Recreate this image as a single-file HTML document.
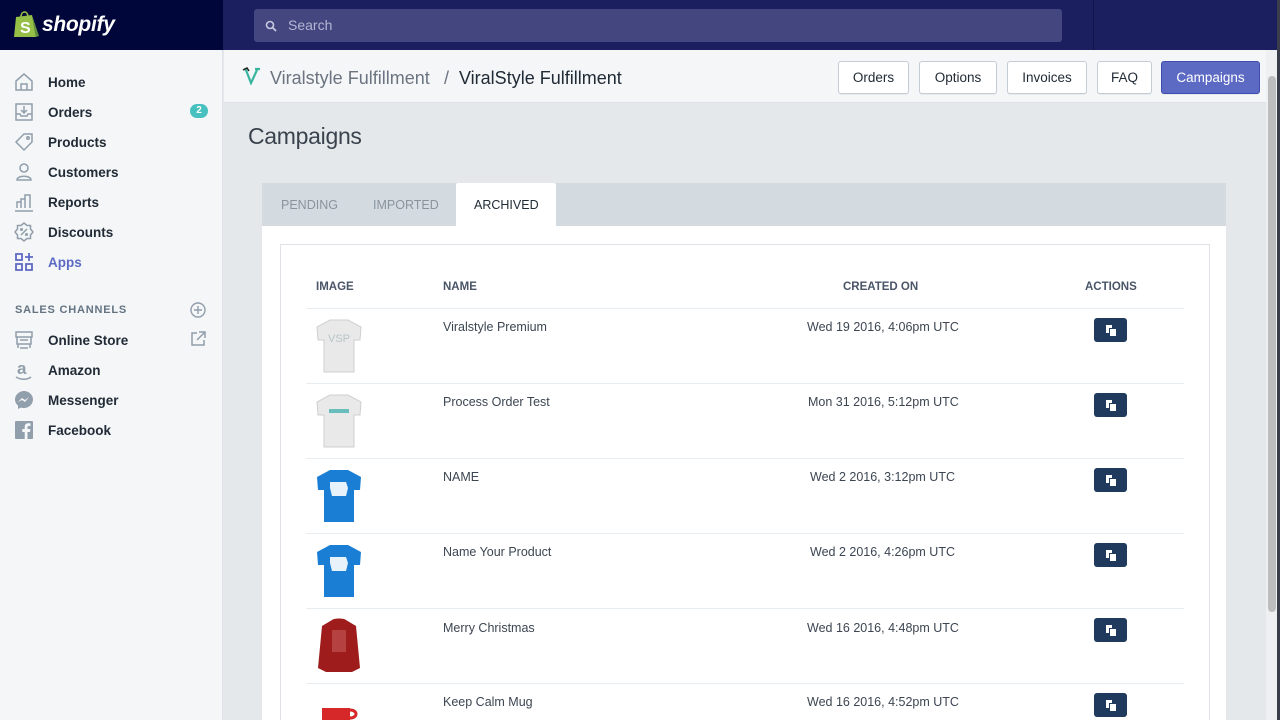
<!DOCTYPE html>
<html><head><meta charset="utf-8"><style>
*{box-sizing:border-box;margin:0;padding:0}
body{width:1280px;height:720px;overflow:hidden;font-family:"Liberation Sans",sans-serif;background:#e4e8eb;position:relative}
.top{position:absolute;left:0;top:0;width:1280px;height:50px;background:#1c1f5f}
.topl{position:absolute;left:0;top:0;width:223px;height:50px;background:#000639}
.search{position:absolute;left:254px;top:9px;width:808px;height:33px;background:#43467f;border-radius:3px;color:#b4b6d4;font-size:14px;line-height:33px;padding-left:34px}
.div{position:absolute;left:1093px;top:0;width:1px;height:50px;background:#12154a}
.side{position:absolute;left:0;top:50px;width:223px;height:670px;background:#f4f6f8;border-right:1px solid #dfe3e8}
.nav{position:absolute;left:0;width:200px;height:20px;font-size:13.5px;color:#212b36;font-weight:bold}
.nav svg{position:absolute;left:14px;top:0}
.nav span{position:absolute;left:48px;top:3px;white-space:nowrap;line-height:16px}
.hdr{position:absolute;left:224px;top:50px;width:1044px;height:53px;background:#f4f6f8;border-bottom:1px solid #dde1e5}
.btn{position:absolute;top:61px;height:33px;background:#fff;border:1px solid #c4cdd5;border-radius:3px;font-size:13.5px;color:#212b36;text-align:center;line-height:31px;box-shadow:0 1px 0 rgba(0,0,0,.05)}
.th{position:absolute;top:281px;font-size:11.5px;font-weight:bold;color:#4a5568}
.row{position:absolute;left:306px;width:878px;height:1px;background:#e8edf2}
.cell{position:absolute;font-size:12.5px;color:#3c4652}
.act{position:absolute;left:1094px;width:33px;height:24px;background:#1f3a5c;border-radius:3px}
.act::before{content:"";position:absolute;left:12px;top:7px;width:6px;height:8px;background:#fff}
.act::after{content:"";position:absolute;left:15px;top:10px;width:6px;height:7px;background:#fff;border:1px solid #1f3a5c}
</style></head><body>
<div class="top"></div><div class="topl"></div>
<svg style="position:absolute;left:13px;top:10px" width="26" height="28" viewBox="0 0 26 28"><path d="M3 7 L19 5 L23 27 L1 27 Z" fill="#95bf47"/><path d="M19 5 L23 27 L26 26 Z" fill="#5e8e3e"/><path d="M8 7 C8 1 14 0 15 6" stroke="#95bf47" stroke-width="1.6" fill="none"/><text x="7" y="23" font-size="16" font-weight="bold" fill="#fff" font-family="Liberation Sans">S</text></svg>
<div style="position:absolute;left:42px;top:13px;color:#fff;font-size:21px;font-weight:bold;font-style:italic;letter-spacing:-.3px">shopify</div>
<div class="search">Search</div>
<svg style="position:absolute;left:265px;top:20px" width="12" height="12" viewBox="0 0 12 12"><circle cx="5" cy="5" r="3.5" stroke="#c8cae0" stroke-width="1.6" fill="none"/><path d="M7.5 7.5L11 11" stroke="#c8cae0" stroke-width="1.8"/></svg>
<div class="div"></div>
<div class="side"></div>
<div class="nav" style="top:72px"><svg width="20" height="20" viewBox="0 0 20 20" fill="none" stroke="#919eab" stroke-width="1.5"><path d="M2 9L10 2L18 9V18H2Z M7 18V12H13V18"/></svg><span>Home</span></div>
<div class="nav" style="top:102px"><svg width="20" height="20" viewBox="0 0 20 20" fill="none" stroke="#919eab" stroke-width="1.5"><path d="M2 2H18V18H2Z M2 12H6L7 14H13L14 12H18 M10 4V10 M7 8L10 11L13 8"/></svg><span>Orders</span></div>
<div style="position:absolute;left:190px;top:104px;width:18px;height:14px;border-radius:7px;background:#47c1bf;color:#fff;font-size:10px;font-weight:bold;text-align:center;line-height:14px">2</div>
<div class="nav" style="top:132px"><svg width="20" height="20" viewBox="0 0 20 20" fill="none" stroke="#919eab" stroke-width="1.5"><path d="M2 10L10 2H18V10L10 18Z"/><circle cx="14" cy="6" r="1.2"/></svg><span>Products</span></div>
<div class="nav" style="top:162px"><svg width="20" height="20" viewBox="0 0 20 20" fill="none" stroke="#919eab" stroke-width="1.5"><circle cx="10" cy="6" r="4"/><path d="M3 18C3 13 17 13 17 18Z"/></svg><span>Customers</span></div>
<div class="nav" style="top:192px"><svg width="20" height="20" viewBox="0 0 20 20" fill="none" stroke="#919eab" stroke-width="1.5"><path d="M1 19H19 M3 16V10H7V16 M7 16V7H11V16 M11 16V3H16V16"/></svg><span>Reports</span></div>
<div class="nav" style="top:222px"><svg width="20" height="20" viewBox="0 0 20 20" fill="none" stroke="#919eab" stroke-width="1.5"><path d="M10 1L13 3.5H16.5V7L19 10L16.5 13V16.5H13L10 19L7 16.5H3.5V13L1 10L3.5 7V3.5H7Z M7 13L13 7"/><circle cx="7.5" cy="7.5" r=".8"/><circle cx="12.5" cy="12.5" r=".8"/></svg><span>Discounts</span></div>
<div class="nav" style="top:252px"><svg width="20" height="20" viewBox="0 0 20 20" fill="none" stroke="#5c6ac4" stroke-width="1.8"><path d="M2 2H8V8H2Z M2 12H8V18H2Z M12 12H18V18H12Z M15 1V9 M11 5H19"/></svg><span style="color:#5c6ac4">Apps</span></div>
<div style="position:absolute;left:15px;top:304px;font-size:11px;font-weight:bold;color:#637381;letter-spacing:.8px">SALES CHANNELS</div>
<svg style="position:absolute;left:190px;top:302px" width="16" height="16" viewBox="0 0 16 16" fill="none" stroke="#919eab" stroke-width="1.4"><circle cx="8" cy="8" r="7"/><path d="M8 4V12M4 8H12"/></svg>
<div class="nav" style="top:330px"><svg width="20" height="20" viewBox="0 0 20 20" fill="none" stroke="#919eab" stroke-width="1.5"><path d="M2 2H18V7H2Z M3 7V14H17V7 M6 10H14 M4 14V18 M16 14V18 M6 18H14"/></svg><span>Online Store</span></div>
<svg style="position:absolute;left:190px;top:331px" width="16" height="16" viewBox="0 0 16 16" fill="none" stroke="#919eab" stroke-width="1.5"><path d="M7 2H2V14H14V9 M9 1H15V7 M15 1L7 9"/></svg>
<div class="nav" style="top:360px"><svg width="20" height="20" viewBox="0 0 20 20"><text x="3" y="14" font-size="17" fill="#919eab" font-family="Liberation Sans">a</text><path d="M2 17C7 20 13 20 17 17" stroke="#919eab" stroke-width="1.5" fill="none"/></svg><span>Amazon</span></div>
<div class="nav" style="top:390px"><svg width="20" height="20" viewBox="0 0 20 20"><path d="M10 1C5 1 1 5 1 9.5C1 12 2 14 4 15.5V19L7 17.5C8 18 9 18 10 18C15 18 19 14 19 9.5C19 5 15 1 10 1Z" fill="#919eab"/><path d="M4 12L8 8L11 10L15 7L11 12L8 10Z" fill="#f4f6f8"/></svg><span>Messenger</span></div>
<div class="nav" style="top:420px"><svg width="20" height="20" viewBox="0 0 20 20"><rect x="1" y="1" width="18" height="18" rx="1" fill="#919eab"/><path d="M13.5 19V12H16L16.4 9H13.5V7.3C13.5 6.5 13.8 6 15 6H16.5V3.3C16 3.2 15.2 3.2 14.3 3.2C12.2 3.2 10.7 4.4 10.7 6.8V9H8.3V12H10.7V19Z" fill="#f4f6f8"/></svg><span>Facebook</span></div>

<div class="hdr"></div>
<svg style="position:absolute;left:242px;top:67px" width="20" height="18" viewBox="0 0 20 18"><path d="M2 2L4 3L9 16L15 3 M13 2L18 2" stroke="#39b59f" stroke-width="2.2" fill="none"/><path d="M1 3L5 1L7 4" stroke="#222" stroke-width="1.5" fill="none"/></svg>
<div style="position:absolute;left:270px;top:68px;font-size:18px;color:#6b7480">Viralstyle Fulfillment</div>
<div style="position:absolute;left:444px;top:68px;font-size:18px;color:#6b7480">/</div>
<div style="position:absolute;left:459px;top:68px;font-size:18px;color:#212b36">ViralStyle Fulfillment</div>
<div class="btn" style="left:838px;width:71px">Orders</div>
<div class="btn" style="left:919px;width:78px">Options</div>
<div class="btn" style="left:1007px;width:80px">Invoices</div>
<div class="btn" style="left:1097px;width:55px">FAQ</div>
<div class="btn" style="left:1161px;width:99px;background:#5c6ac4;border-color:#3f4eae;color:#fff">Campaigns</div>

<div style="position:absolute;left:248px;top:123px;font-size:23px;color:#3a434d;letter-spacing:-.3px">Campaigns</div>
<div style="position:absolute;left:262px;top:183px;width:964px;height:44px;background:#d3dbe0"></div>
<div style="position:absolute;left:281px;top:198px;font-size:12.5px;color:#8a949e">PENDING</div>
<div style="position:absolute;left:373px;top:198px;font-size:12.5px;color:#8a949e">IMPORTED</div>
<div style="position:absolute;left:456px;top:183px;width:100px;height:44px;background:#fff;border-radius:2px 2px 0 0"></div>
<div style="position:absolute;left:474px;top:198px;font-size:12.5px;color:#212b36">ARCHIVED</div>
<div style="position:absolute;left:262px;top:226px;width:964px;height:494px;background:#fff"></div>
<div style="position:absolute;left:280px;top:244px;width:930px;height:476px;border:1px solid #dfe3e8;border-bottom:none"></div>
<div class="th" style="left:316px">IMAGE</div>
<div class="th" style="left:443px">NAME</div>
<div class="th" style="left:843px">CREATED ON</div>
<div class="th" style="left:1085px">ACTIONS</div>
<div class="row" style="top:308px"></div><div class="row" style="top:383px"></div><div class="row" style="top:458px"></div><div class="row" style="top:533px"></div><div class="row" style="top:608px"></div><div class="row" style="top:683px"></div>

<svg style="position:absolute;left:316px;top:318px" width="46" height="56" viewBox="0 0 46 56"><path d="M14 2L32 2L45 9L44 22L38 22L38 54L8 54L8 22L2 22L1 9Z" fill="#e9e9e9" stroke="#cfcfcf"/><text x="12" y="24" font-size="11" fill="#b8c4c8" font-family="Liberation Sans">VSP</text></svg>
<svg style="position:absolute;left:316px;top:393px" width="46" height="56" viewBox="0 0 46 56"><path d="M14 2L32 2L45 9L44 22L38 22L38 54L8 54L8 22L2 22L1 9Z" fill="#e9e9e9" stroke="#cfcfcf"/><rect x="13" y="16" width="20" height="4" fill="#3aa" opacity=".7"/></svg>
<svg style="position:absolute;left:316px;top:468px" width="46" height="56" viewBox="0 0 46 56"><path d="M14 2L32 2L45 9L44 22L38 22L38 54L8 54L8 22L2 22L1 9Z" fill="#1a7fd4"/><path d="M14 14L30 14L32 20L30 28L16 28L14 20Z" fill="#fff" opacity=".9"/></svg>
<svg style="position:absolute;left:316px;top:543px" width="46" height="56" viewBox="0 0 46 56"><path d="M14 2L32 2L45 9L44 22L38 22L38 54L8 54L8 22L2 22L1 9Z" fill="#1a7fd4"/><path d="M14 14L30 14L32 20L30 28L16 28L14 20Z" fill="#fff" opacity=".9"/></svg>
<svg style="position:absolute;left:316px;top:618px" width="46" height="56" viewBox="0 0 46 56"><path d="M16 2C18 0 28 0 30 2L40 8L44 50L36 54L10 54L2 50L6 8Z" fill="#9e1c1c"/><rect x="16" y="12" width="14" height="22" fill="#c66" opacity=".5"/></svg>
<svg style="position:absolute;left:318px;top:702px" width="42" height="18" viewBox="0 0 42 18"><rect x="4" y="6" width="28" height="14" fill="#d62828"/><path d="M32 8C40 8 40 16 32 16" stroke="#d62828" stroke-width="3" fill="none"/></svg>

<div class="cell" style="left:443px;top:320px">Viralstyle Premium</div>
<div class="cell" style="left:443px;top:395px">Process Order Test</div>
<div class="cell" style="left:443px;top:470px">NAME</div>
<div class="cell" style="left:443px;top:545px">Name Your Product</div>
<div class="cell" style="left:443px;top:621px">Merry Christmas</div>
<div class="cell" style="left:443px;top:695px">Keep Calm Mug</div>
<div class="cell" style="left:807px;top:320px">Wed 19 2016, 4:06pm UTC</div>
<div class="cell" style="left:808px;top:395px">Mon 31 2016, 5:12pm UTC</div>
<div class="cell" style="left:810px;top:470px">Wed 2 2016, 3:12pm UTC</div>
<div class="cell" style="left:810px;top:545px">Wed 2 2016, 4:26pm UTC</div>
<div class="cell" style="left:807px;top:621px">Wed 16 2016, 4:48pm UTC</div>
<div class="cell" style="left:807px;top:695px">Wed 16 2016, 4:52pm UTC</div>
<div class="act" style="top:318px"></div><div class="act" style="top:393px"></div><div class="act" style="top:468px"></div><div class="act" style="top:543px"></div><div class="act" style="top:618px"></div><div class="act" style="top:693px"></div>

<div style="position:absolute;left:1266px;top:50px;width:11px;height:670px;background:#eef0f2"></div>
<div style="position:absolute;left:1268px;top:76px;width:8px;height:536px;background:#bdbdbd;border-radius:4px"></div>
<div style="position:absolute;left:1277px;top:0;width:3px;height:720px;background:#3a3d4a"></div>
</body></html>
